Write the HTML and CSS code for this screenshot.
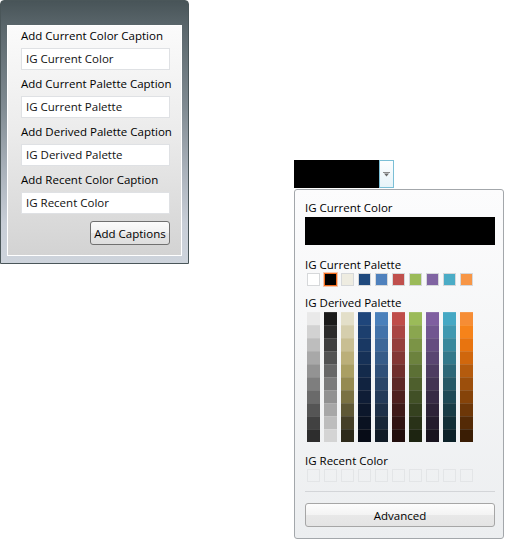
FILE: index.html
```html
<!DOCTYPE html>
<html>
<head>
<meta charset="utf-8">
<link rel="stylesheet" href="styles.css">
</head>
<body>
<div class="stage">
  <section class="panel">
    <div class="panel-inner">
      <div class="cap-label">Add Current Color Caption</div>
      <div class="textbox">IG Current Color</div>
      <div class="cap-label">Add Current Palette Caption</div>
      <div class="textbox">IG Current Palette</div>
      <div class="cap-label">Add Derived Palette Caption</div>
      <div class="textbox">IG Derived Palette</div>
      <div class="cap-label">Add Recent Color Caption</div>
      <div class="textbox">IG Recent Color</div>
      <button class="btn">Add Captions</button>
    </div>
  </section>

  <section class="picker">
    <div class="combo">
      <div class="combo-value"></div>
      <div class="combo-btn">
        <svg width="7" height="5" viewBox="0 0 7 5"><rect x="0" y="0" width="7" height="1" fill="#8a8a8a"/><polygon points="1,1.5 6,1.5 3.5,4.5" fill="#6a6a6a"/></svg>
      </div>
    </div>
    <div class="popup">
      <div class="sec-label">IG Current Color</div>
      <div class="current-bar"></div>

      <div class="sec-label gap-palette">IG Current Palette</div>
      <div class="swatches">
        <span class="sw" style="background:#ffffff"></span>
        <span class="sw selected" style="background:#000000"></span>
        <span class="sw" style="background:#eeece1"></span>
        <span class="sw" style="background:#1f497d"></span>
        <span class="sw" style="background:#4f81bd"></span>
        <span class="sw" style="background:#c0504d"></span>
        <span class="sw" style="background:#9bbb59"></span>
        <span class="sw" style="background:#8064a2"></span>
        <span class="sw" style="background:#4bacc6"></span>
        <span class="sw" style="background:#f79646"></span>
      </div>

      <div class="sec-label gap-derived">IG Derived Palette</div>
      <div class="derived">
        <div class="col">
          <span style="background:#e9e9e9"></span><span style="background:#d2d2d2"></span><span style="background:#bdbdbd"></span><span style="background:#a8a8a8"></span><span style="background:#939393"></span><span style="background:#7e7e7e"></span><span style="background:#6a6a6a"></span><span style="background:#555555"></span><span style="background:#414141"></span><span style="background:#2d2d2d"></span>
        </div>
        <div class="col">
          <span style="background:#1b1b1b"></span><span style="background:#2b2b2b"></span><span style="background:#3e3e3e"></span><span style="background:#525252"></span><span style="background:#676767"></span><span style="background:#7b7b7b"></span><span style="background:#919191"></span><span style="background:#a7a7a7"></span><span style="background:#bdbdbd"></span><span style="background:#d4d4d4"></span>
        </div>
        <div class="col">
          <span style="background:#e3dfc9"></span><span style="background:#d5cead"></span><span style="background:#c8be92"></span><span style="background:#bbaf79"></span><span style="background:#aa9f63"></span><span style="background:#958a51"></span><span style="background:#7a7143"></span><span style="background:#5f5836"></span><span style="background:#453f28"></span><span style="background:#2d2a1a"></span>
        </div>
        <div class="col">
          <span style="background:#1f467b"></span><span style="background:#1c3f6e"></span><span style="background:#193863"></span><span style="background:#163157"></span><span style="background:#132a4b"></span><span style="background:#112340"></span><span style="background:#0f1d36"></span><span style="background:#0c172b"></span><span style="background:#0a1221"></span><span style="background:#070c17"></span>
        </div>
        <div class="col">
          <span style="background:#4a80bb"></span><span style="background:#4373aa"></span><span style="background:#3d6799"></span><span style="background:#375c89"></span><span style="background:#305079"></span><span style="background:#2a4568"></span><span style="background:#243a58"></span><span style="background:#1e3048"></span><span style="background:#182637"></span><span style="background:#111b26"></span>
        </div>
        <div class="col">
          <span style="background:#bf4d4a"></span><span style="background:#a94644"></span><span style="background:#953f3d"></span><span style="background:#833735"></span><span style="background:#702f2d"></span><span style="background:#5d2726"></span><span style="background:#4d201f"></span><span style="background:#3e1a19"></span><span style="background:#301413"></span><span style="background:#220e0d"></span>
        </div>
        <div class="col">
          <span style="background:#9bbb59"></span><span style="background:#8aa64f"></span><span style="background:#7b9446"></span><span style="background:#6c823e"></span><span style="background:#5c7035"></span><span style="background:#4e5f2d"></span><span style="background:#415026"></span><span style="background:#35411f"></span><span style="background:#293218"></span><span style="background:#1d2411"></span>
        </div>
        <div class="col">
          <span style="background:#7f5fa0"></span><span style="background:#715690"></span><span style="background:#654d80"></span><span style="background:#594571"></span><span style="background:#4d3c61"></span><span style="background:#423453"></span><span style="background:#372b45"></span><span style="background:#2d2338"></span><span style="background:#231c2c"></span><span style="background:#19141f"></span>
        </div>
        <div class="col">
          <span style="background:#45a8c4"></span><span style="background:#3f98b0"></span><span style="background:#38889c"></span><span style="background:#32788a"></span><span style="background:#2c6777"></span><span style="background:#255866"></span><span style="background:#1f4955"></span><span style="background:#193c46"></span><span style="background:#132f37"></span><span style="background:#0c2128"></span>
        </div>
        <div class="col">
          <span style="background:#f68d35"></span><span style="background:#f6831a"></span><span style="background:#e8740f"></span><span style="background:#d0670d"></span><span style="background:#b45b0e"></span><span style="background:#9c4f0c"></span><span style="background:#854309"></span><span style="background:#6d3708"></span><span style="background:#542a06"></span><span style="background:#3a1d04"></span>
        </div>
      </div>

      <div class="sec-label gap-recent">IG Recent Color</div>
      <div class="swatches recent">
        <span class="sw empty"></span><span class="sw empty"></span><span class="sw empty"></span><span class="sw empty"></span><span class="sw empty"></span><span class="sw empty"></span><span class="sw empty"></span><span class="sw empty"></span><span class="sw empty"></span><span class="sw empty"></span>
      </div>

      <div class="sep"></div>
      <button class="adv">Advanced</button>
    </div>
  </section>
</div>
</body>
</html>
```

FILE: styles.css
```css
html, body {
  margin: 0;
  padding: 0;
  background: #ffffff;
}

body {
  font-family: "Open Sans", "Noto Sans", "DejaVu Sans", sans-serif;
  font-size: 11.5px;
  color: #000;
}

.stage {
  display: flex;
  align-items: flex-start;
}

/* ---------- left caption panel ---------- */
.panel {
  box-sizing: border-box;
  width: 189px;
  height: 264px;
  border: 1px solid #4a5659;
  border-radius: 4px 4px 0 0;
  padding: 24px 6px 7px 6px;
  display: flex;
  background: linear-gradient(to bottom, #485458 0%, #5b676c 10%, #7f8a91 40%, #aab2bb 65%, #c8ced7 85%, #ced4dc 100%);
}

.panel-inner {
  flex: 1;
  min-width: 0;
  display: flex;
  flex-direction: column;
  border: 1px solid #ffffff;
  padding: 2px 11px 0 13px;
  background: linear-gradient(to bottom, #fbfbfb 0%, #ececec 45%, #d3d3d3 100%);
}

.cap-label {
  line-height: 16px;
  height: 16px;
  margin-bottom: 4px;
  white-space: nowrap;
}

.textbox {
  box-sizing: border-box;
  height: 22px;
  border: 1px solid #dfe1e4;
  background: #ffffff;
  padding-left: 4px;
  line-height: 20px;
  margin-bottom: 6px;
  color: #111;
  white-space: nowrap;
}

.btn {
  align-self: flex-end;
  box-sizing: border-box;
  width: 80px;
  height: 24px;
  margin-top: 1px;
  border: 1px solid #707070;
  border-radius: 3px;
  padding: 0;
  font: inherit;
  color: #000;
  background: linear-gradient(to bottom, #fbfbfb 0%, #f1f1f1 50%, #e5e5e5 51%, #dedede 100%);
}

/* ---------- color picker ---------- */
.picker {
  margin-left: 105px;
  margin-top: 160px;
  display: flex;
  flex-direction: column;
}

.combo {
  display: flex;
  height: 28px;
  width: 100px;
}

.combo-value {
  width: 85px;
  background: #000;
}

.combo-btn {
  box-sizing: border-box;
  width: 15px;
  border: 1px solid #7bbfd6;
  background: linear-gradient(to bottom, #fdfeff, #e6f3f8);
  display: flex;
  align-items: center;
  justify-content: center;
}

.popup {
  box-sizing: border-box;
  width: 210px;
  height: 350px;
  margin-top: 1px;
  border: 1px solid #a3a7ab;
  border-radius: 3px;
  padding: 10px 8px 0 10px;
  display: flex;
  flex-direction: column;
  background: linear-gradient(to bottom, #fcfcfd 0%, #f4f5f6 50%, #eceef0 100%);
}

.sec-label {
  line-height: 16px;
  height: 16px;
  white-space: nowrap;
}

.current-bar {
  height: 28px;
  margin-top: 1px;
  background: #000;
}

.gap-palette { margin-top: 12px; }
.gap-derived { margin-top: 9px; }
.gap-recent { margin-top: 11px; }

.swatches {
  display: flex;
  gap: 4px;
  margin-left: 2px;
}

.sw {
  box-sizing: border-box;
  width: 13px;
  height: 13px;
  border: 1px solid #d6d8da;
}

.sw.selected {
  border: 1px solid #f26b1d;
  box-shadow: 0 0 0 1px rgba(242, 107, 29, 0.35);
}

.sw.empty {
  background: transparent;
  border-color: #e3e5e7;
}

.derived {
  display: flex;
  gap: 4px;
  margin-left: 2px;
  margin-top: 1px;
}

.col {
  display: flex;
  flex-direction: column;
  width: 13px;
}

.col span {
  display: block;
  height: 13px;
  box-shadow: inset 0 1px 0 rgba(255, 255, 255, 0.12);
}

.sep {
  height: 1px;
  margin-top: 9px;
  background: #d3d5d8;
}

.adv {
  box-sizing: border-box;
  height: 24px;
  margin-top: 11px;
  border: 1px solid #a6a6a6;
  border-radius: 3px;
  padding: 0;
  font: inherit;
  color: #000;
  background: linear-gradient(to bottom, #fdfdfd 0%, #f3f3f3 50%, #e8e8e8 51%, #e4e4e4 100%);
}
```
